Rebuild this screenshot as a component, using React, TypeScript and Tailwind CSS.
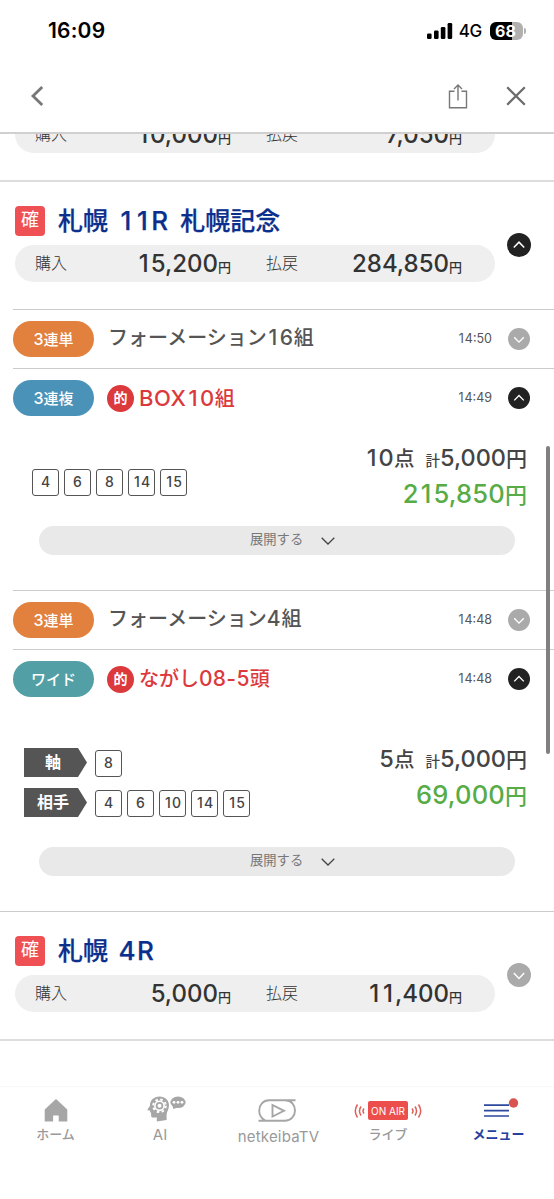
import React from "react";

const JP = "font-['Inter','Noto_Sans_CJK_JP',sans-serif]";

/* Gives the narrow "1" the same advance as the other digits. */
function Num({ children }: { children: string }) {
  return (
    <>
      {children.split(/(1)/).map((c, i) =>
        c === "1" ? (
          <span key={i} className="mx-[0.08em]">
            1
          </span>
        ) : (
          c
        ),
      )}
    </>
  );
}

/* Splits a string so that latin runs can carry their own metrics. */
function Mixed({ text, latin }: { text: string; latin: string }) {
  const parts = text.match(/[\x20-\x7e]+|[^\x20-\x7e]+/g) ?? [];
  return (
    <>
      {parts.map((p, i) =>
        /[\x21-\x7e]/.test(p) ? (
          <span key={i} className={latin}>
            <Num>{p}</Num>
          </span>
        ) : (
          <span key={i}>{p}</span>
        ),
      )}
    </>
  );
}

function Toggle({ open, large }: { open?: boolean; large?: boolean }) {
  return (
    <svg
      viewBox="0 0 24 24"
      className={`shrink-0 ${large ? "size-[24px]" : "size-[22px]"}`}
      fill="none"
    >
      <circle cx="12" cy="12" r="12" fill={open ? "#222" : "#aaa"} />
      <path
        d={open ? "M6.8 14.6 12 9.2l5.2 5.4" : "M6.8 10l5.2 5.4L17.2 10"}
        stroke="#fff"
        strokeWidth="1.5"
      />
    </svg>
  );
}

function Money({ buy, pay }: { buy: string; pay: string }) {
  return (
    <div className="flex h-[37px] w-[480px] shrink-0 items-center rounded-full bg-[#efefef] pl-[20px] text-[#333]">
      <span className="w-[40px] pb-px text-[16px] font-light leading-[36px]">購入</span>
      <div className="flex w-[156px] items-baseline justify-end">
        <span className="text-[24px] font-medium leading-[37px]">
          <Num>{buy}</Num>
        </span>
        <span className="text-[13px] font-medium">円</span>
      </div>
      <span className="ml-[35px] w-[40px] pb-px text-[16px] font-light leading-[36px]">払戻</span>
      <div className="flex w-[156px] items-baseline justify-end">
        <span className="text-[24px] font-medium leading-[37px]">
          <Num>{pay}</Num>
        </span>
        <span className="text-[13px] font-medium">円</span>
      </div>
    </div>
  );
}

function Race({ title, buy, pay, open }: { title: string; buy: string; pay: string; open?: boolean }) {
  return (
    <div className="flex pl-[15px] pt-[24px]">
      <div>
        <div className="flex h-[30px] items-center">
          <span className="flex size-[30px] items-center justify-center rounded-[4px] bg-[#ef5054] pb-[2px] text-[18px] leading-none text-white">
            確
          </span>
          <span className="ml-[13px] whitespace-pre pb-px text-[25px] font-medium leading-[30px] text-[#0b2f8c] [-webkit-text-stroke:0.25px_#0b2f8c]">
            <Mixed text={title} latin="text-[26px] leading-[29px] tracking-[1.5px] [word-spacing:2px]" />
          </span>
        </div>
        <div className="mt-[9px]">
          <Money buy={buy} pay={pay} />
        </div>
      </div>
      <div className="ml-[12px] mt-[27px]">
        <Toggle open={open} large />
      </div>
    </div>
  );
}

function Bet({
  kind,
  color,
  title,
  hit,
  time,
  open,
}: {
  kind: string;
  color: string;
  title: string;
  hit?: boolean;
  time: string;
  open?: boolean;
}) {
  return (
    <div className="ml-[13px] flex h-[59px] items-center border-t border-[#ccc]">
      <span
        className={`flex h-[36px] w-[81px] items-center justify-center rounded-full text-[15px] font-medium leading-none text-white ${color}`}
      >
        <Mixed text={kind} latin="text-[16px]" />
      </span>
      {hit ? (
        <>
          <span className="ml-[13px] flex size-[27px] items-center justify-center rounded-full bg-[#dc393d] pb-px text-[14px] font-bold leading-none text-white">
            的
          </span>
          <span className="ml-[5px] text-[20px] font-medium leading-[30px] text-[#dc393d]">
            <Mixed text={title} latin={title.startsWith("BOX") ? "text-[22px] tracking-[0.6px]" : "text-[21px] tracking-[0.3px]"} />
          </span>
        </>
      ) : (
        <span className="ml-[14px] pb-[2px] text-[20px] font-medium leading-[30px] text-[#555]">
          <Mixed text={title} latin="text-[21px] tracking-[0.8px]" />
        </span>
      )}
      <span className="ml-auto mr-[16px] pt-px text-[12.5px] leading-none text-[#555]">
        <Num>{time}</Num>
      </span>
      <span className="mr-[24px]">
        <Toggle open={open} />
      </span>
    </div>
  );
}

function Chips({ items }: { items: string[] }) {
  return (
    <div className="flex gap-[5px]">
      {items.map((n) => (
        <span
          key={n}
          className="flex size-[27px] items-center justify-center rounded-[3px] border border-[#555] pb-px text-[14px] font-medium leading-none text-[#444]"
        >
          <Num>{n}</Num>
        </span>
      ))}
    </div>
  );
}

function Tag({ label }: { label: string }) {
  return (
    <span className="flex h-[29px] w-[63px] items-center justify-center bg-[#555] pb-[2px] pr-[5px] text-[16px] font-bold leading-none text-white [clip-path:polygon(0_0,54px_0,100%_50%,54px_100%,0_100%)]">
      {label}
    </span>
  );
}

function Totals({ points, stake, payout }: { points: string; stake: string; payout: string }) {
  return (
    <div className="mr-[27px] flex flex-col items-end pt-px font-medium">
      <div className="flex h-[36px] items-baseline text-[#444]">
        <span className="text-[23.5px] leading-[37px] tracking-[0.3px]">
          <Num>{points}</Num>
        </span>
        <span className="text-[20.5px]">点</span>
        <span className="ml-[11px] text-[14.5px]">計</span>
        <span className="text-[23.5px]">{stake}</span>
        <span className="text-[21px]">円</span>
      </div>
      <div className="flex h-[38px] items-baseline text-[#57ac46]">
        <span className="text-[25.5px] leading-[37px] tracking-[0.2px]">
          <Num>{payout}</Num>
        </span>
        <span className="text-[22px]">円</span>
      </div>
    </div>
  );
}

function Expand() {
  return (
    <div className="ml-[39px] flex h-[29px] w-[476px] items-center rounded-full bg-[#e9e9e9] pl-[211px] text-[#777]">
      <span className="pb-[2px] text-[13.3px] leading-none">展開する</span>
      <svg viewBox="0 0 14 8" className="ml-[18px] h-[8px] w-[14px]" fill="none">
        <path d="M.7.8 7 7 13.3.8" stroke="#444" strokeWidth="1.3" />
      </svg>
    </div>
  );
}

function HeadGear() {
  return (
    <svg viewBox="0 0 39 26" className="h-[26px] w-[39px]">
      <path
        d="M12.5.5C18 .5 22 4 22 9.5c0 4-2.4 6.3-2.4 9.5v4.9L9.8 25.5v-4H6.1c-1.4 0-2-.8-2-2.1v-2.7l-1.3-.6.7-1.3-2.6-.6c-.6-.2-.5-.8-.1-1.3l2.1-3C3 4 7 .5 12.5.5Z"
        fill="#a6a6a6"
      />
      <circle cx="12.5" cy="9.8" r="6.3" fill="none" stroke="#fff" strokeWidth="2" strokeDasharray="2.5 2.45" />
      <circle cx="12.5" cy="9.8" r="5.4" fill="#fff" />
      <circle cx="12.5" cy="9.8" r="2.9" fill="none" stroke="#a6a6a6" strokeWidth="1.8" />
      <ellipse cx="31" cy="6.3" rx="7.6" ry="5.8" fill="#a6a6a6" />
      <path d="M26 8.5 26 13l5-1.5Z" fill="#a6a6a6" />
      <circle cx="27" cy="6.3" r="1.4" fill="#fff" />
      <circle cx="31" cy="6.3" r="1.4" fill="#fff" />
      <circle cx="35" cy="6.3" r="1.4" fill="#fff" />
    </svg>
  );
}

function Waves({ flip }: { flip?: boolean }) {
  return (
    <svg
      viewBox="0 0 11 16"
      className={`h-[16px] w-[11px] ${flip ? "-scale-x-100" : ""}`}
      fill="none"
      stroke="#de5f57"
      strokeWidth="1.5"
    >
      <path d="M3.5 1.5Q-.9 8 3.5 14.5M7 3.5Q3.9 8 7 12.5M10 5.5Q8 8 10 10.5" />
    </svg>
  );
}

export default function App() {
  return (
    <div className={`relative flex h-[1199px] w-[554px] flex-col overflow-hidden bg-white ${JP}`}>
      <header className="h-[134px] shrink-0 border-b-2 border-[#d0d0d0]">
        <div className="flex h-[61px] items-center pl-[48px] pr-[28px]">
          <span className="text-[21px] font-semibold leading-none tracking-[0.2px] text-black">16:09</span>
          <svg viewBox="0 0 26 16" className="ml-auto h-[16px] w-[26px]" fill="#000">
            <rect x="0" y="10.5" width="4.6" height="5.5" rx="1.3" />
            <rect x="7" y="7.5" width="4.6" height="8.5" rx="1.3" />
            <rect x="13.8" y="4" width="4.6" height="12" rx="1.3" />
            <rect x="20.6" y="0" width="4.6" height="16" rx="1.3" />
          </svg>
          <span className="ml-[6px] pt-px text-[17px] font-medium leading-none tracking-[-0.3px] text-black">4G</span>
          <span className="ml-[8px] flex h-[18px] w-[33px] items-center justify-center rounded-[6px] bg-[linear-gradient(90deg,#000_68%,#b0b0b0_68%)] pr-[2px] text-[16px] font-bold leading-none text-white">
            68
          </span>
          <span className="ml-px h-[6px] w-[2px] rounded-r-full bg-[#b0b0b0]" />
        </div>
        <div className="flex h-[70px] items-center pl-[30px] pr-[28px]">
          <svg viewBox="0 0 14 20" className="h-[20px] w-[14px]" fill="none">
            <path d="M12.2 1 3 10l9.2 9" stroke="#777" strokeWidth="2.8" />
          </svg>
          <svg viewBox="0 0 20 26" className="ml-auto h-[26px] w-[20px]" fill="none" stroke="#777" strokeWidth="1.4">
            <path d="M6.5 8.2H1.5v16.5h17V8.2h-5M10 17.5V2M6 6l4-4 4 4" />
          </svg>
          <svg viewBox="0 0 20 20" className="ml-[38px] h-[20px] w-[20px]" fill="none">
            <path d="M1.2 1.2 18.8 18.8M18.8 1.2 1.2 18.8" stroke="#6c6c6c" strokeWidth="2.3" />
          </svg>
        </div>
      </header>

      <section className="flex h-[19px] shrink-0 flex-col justify-end overflow-hidden pl-[15px]">
        <Money buy="10,000" pay="7,050" />
      </section>

      <section className="mt-[27px] h-[129px] shrink-0 border-t-2 border-[#ddd]">
        <Race title="札幌 11R 札幌記念" buy="15,200" pay="284,850" open />
      </section>

      <section className="h-[281px] shrink-0">
        <Bet kind="3連単" color="bg-[#e2803e]" title="フォーメーション16組" time="14:50" />
        <Bet kind="3連複" color="bg-[#4b92b9]" title="BOX10組" time="14:49" hit open />
        <div className="flex h-[99px] justify-between pl-[32px] pt-[11px]">
          <div className="pt-[31px]">
            <Chips items={["4", "6", "8", "14", "15"]} />
          </div>
          <Totals points="10" stake="5,000" payout="215,850" />
        </div>
        <Expand />
      </section>

      <section className="h-[321px] shrink-0">
        <Bet kind="3連単" color="bg-[#e2803e]" title="フォーメーション4組" time="14:48" />
        <Bet kind="ワイド" color="bg-[#529fa6]" title="ながし08-5頭" time="14:48" hit open />
        <div className="flex h-[139px] justify-between pl-[24px] pt-[31px]">
          <div className="flex flex-col gap-[11px] pt-[9px]">
            <div className="flex items-end gap-[8px]">
              <Tag label="軸" />
              <Chips items={["8"]} />
            </div>
            <div className="flex items-end gap-[8px]">
              <Tag label="相手" />
              <Chips items={["4", "6", "10", "14", "15"]} />
            </div>
          </div>
          <Totals points="5" stake="5,000" payout="69,000" />
        </div>
        <Expand />
      </section>

      <section className="h-[130px] shrink-0 border-b-2 border-t border-b-[#ddd] border-t-[#ccc]">
        <Race title="札幌 4R" buy="5,000" pay="11,400" />
      </section>

      <nav className="mt-[45px] flex h-[113px] shrink-0 border-t border-[#f8f8f8] text-[13px] leading-none text-[#999]">
        <div className="flex w-[111px] flex-col items-center">
          <svg viewBox="0 0 24 23" className="mt-[12px] h-[23px] w-[24px]" fill="#a6a6a6">
            <path d="M12 0 .7 10.5V22.5h8.4v-6h5.6v6h8.6v-12Z" />
          </svg>
          <span className="mt-[6px] font-medium">ホーム</span>
        </div>
        <div className="flex w-[98px] flex-col items-center">
          <div className="mt-[9px] pl-[12px]">
            <HeadGear />
          </div>
          <span className="mt-[5px] text-[15px]">AI</span>
        </div>
        <div className="flex w-[139px] flex-col items-center">
          <svg viewBox="0 0 38 24" className="mr-[3px] mt-[12px] h-[24px] w-[38px]" fill="none" stroke="#a6a6a6" strokeWidth="1.9">
            <path d="M37.5 1.3H11C5 1.3 1.2 6 1.2 11.5c0 5 2.8 8.5 6.5 10.3M27 1.3c6.5 0 10 4.5 10 10.3C37 17 33 21.8 27 21.8H.5" />
            <path d="M14.5 6v11.5l11.5-5.7Z" />
          </svg>
          <span className="mt-[6px] text-[15px] tracking-[0.2px]">netkeibaTV</span>
        </div>
        <div className="flex w-[80px] flex-col items-center">
          <div className="mt-[14px] flex items-center gap-[3px]">
            <Waves />
            <span className="flex h-[19px] w-[40px] items-center justify-center whitespace-nowrap rounded-[2px] bg-[#eb4e4b] pt-px text-[10px] text-white">
              ON AIR
            </span>
            <Waves flip />
          </div>
          <span className="mt-[8px] font-medium">ライブ</span>
        </div>
        <div className="flex w-[126px] flex-col items-center pl-[15px] text-[#2440a0]">
          <svg viewBox="0 0 36 20" className="ml-[4px] mt-[11px] h-[20px] w-[36px]" fill="none">
            <path d="M1 7.2h25M1 12.7h25M1 18h25" stroke="#2c489f" strokeWidth="1.7" />
            <circle cx="30.5" cy="5" r="4.7" fill="#d9534f" />
          </svg>
          <span className="mt-[10px] font-bold">メニュー</span>
        </div>
      </nav>

      <div className="absolute left-[546px] top-[446px] h-[308px] w-[4px] rounded-full bg-[#808080]" />
    </div>
  );
}
